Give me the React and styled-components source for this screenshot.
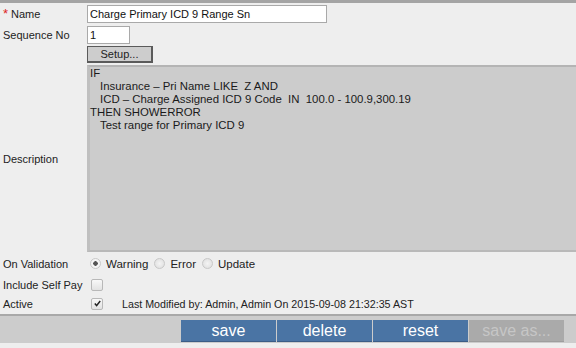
import React from 'react'
import styled, { createGlobalStyle } from 'styled-components';

const GlobalStyle = createGlobalStyle`
  html, body { margin: 0; padding: 0; background: #eeeeee; }
  body { font-family: Arial, "Liberation Sans", sans-serif; font-size: 11px; color: #222; }
`;

const descLines = [
    { text: 'IF', indent: false },
    { text: 'Insurance \u2013 Pri Name LIKE  Z AND', indent: true },
    { text: 'ICD \u2013 Charge Assigned ICD 9 Code  IN  100.0 - 100.9,300.19', indent: true },
    { text: 'THEN SHOWERROR', indent: false },
    { text: 'Test range for Primary ICD 9', indent: true },
];

const App = () => {
    return (
        <>
            <GlobalStyle />
            <PageStyled>
                <div className="form">
                    <div className="row name">
                        <label><span className="req">*</span>Name</label>
                        <div className="field">
                            <input className="txt wide" defaultValue="Charge Primary ICD 9 Range Sn" />
                        </div>
                    </div>
                    <div className="row seq">
                        <label>Sequence No</label>
                        <div className="field">
                            <input className="txt short" defaultValue="1" />
                        </div>
                    </div>
                    <div className="row setup">
                        <label></label>
                        <div className="field">
                            <button className="setup-btn">Setup...</button>
                        </div>
                    </div>
                    <div className="row desc">
                        <label>Description</label>
                        <div className="desc-box">
                            {descLines.map((l, i) => (
                                <p key={i} className={l.indent ? 'ind' : ''}>{l.text}</p>
                            ))}
                        </div>
                    </div>
                    <div className="row validation">
                        <label>On Validation</label>
                        <div className="field opts">
                            <span className="opt"><Radio checked />Warning</span>
                            <span className="opt"><Radio />Error</span>
                            <span className="opt"><Radio />Update</span>
                        </div>
                    </div>
                    <div className="row selfpay">
                        <label>Include Self Pay</label>
                        <div className="field">
                            <Check />
                        </div>
                    </div>
                    <div className="row active">
                        <label>Active</label>
                        <div className="field">
                            <Check checked />
                            <span className="modified">Last Modified by: Admin, Admin On 2015-09-08 21:32:35 AST</span>
                        </div>
                    </div>
                </div>
                <Footer>
                    <ActionButton>save</ActionButton>
                    <ActionButton>delete</ActionButton>
                    <ActionButton>reset</ActionButton>
                    <ActionButton disabled>save as...</ActionButton>
                </Footer>
            </PageStyled>
        </>
    )
}

const Radio = ({ checked }) => (
    <RadioStyled $checked={checked} />
);

const Check = ({ checked }) => (
    <CheckStyled>
        {checked && (
            <svg width="9" height="9" viewBox="0 0 9 9">
                <path d="M1.8 4.6 L3.6 6.6 L7.2 2" fill="none" stroke="#222" strokeWidth="1.5" />
            </svg>
        )}
    </CheckStyled>
);

//styled
const PageStyled = styled.div`
width: 576px;
height: 348px;
overflow: hidden;
border-top: 3px solid #a4a4a4;
box-sizing: border-box;
.form{
    .row{
        display: flex;
        align-items: center;
        label{
            width: 87px;
            flex-shrink: 0;
            padding-left: 3px;
            box-sizing: border-box;
            font-size: 11px;
            white-space: nowrap;
            color: #222;
            .req{
                color: #d22;
                font-size: 13px;
                margin-right: 3px;
            }
        }
        .field{
            display: flex;
            align-items: center;
        }
    }
    .name{ height: 21px; }
    .seq{ height: 21px; }
    .setup{ height: 19px; }
    .txt{
        height: 18px;
        box-sizing: border-box;
        border: 1px solid #a9a9a9;
        background: #fff;
        font-family: Arial, "Liberation Sans", sans-serif;
        font-size: 11px;
        padding: 0 2px;
        color: #111;
        outline: none;
    }
    .wide{ width: 240px; }
    .short{ width: 43px; }
    .setup-btn{
        width: 66px;
        height: 17px;
        padding: 0;
        box-sizing: border-box;
        background: #cdcdcd;
        border: 1px solid #5a5a5a;
        border-right-width: 2px;
        border-bottom-width: 2px;
        font-family: Arial, "Liberation Sans", sans-serif;
        font-size: 11px;
        color: #222;
    }
    .desc{
        margin-top: 1px;
    }
    .desc-box{
        flex: 1;
        height: 187px;
        background: #cccccc;
        border-top: 2px solid #b4b4b4;
        border-left: 3px solid #bfbfbf;
        border-bottom: 2px solid #b9b9b9;
        box-sizing: border-box;
        padding: 0;
        p{
            margin: 0;
            line-height: 13px;
            font-size: 11.4px;
            white-space: pre;
            color: #1a1a1a;
        }
        .ind{ padding-left: 10px; }
    }
    .validation{ height: 23px; }
    .selfpay{ height: 20px; }
    .active{ height: 17px; }
    .opts{
        padding-left: 3px;
        .opt{
            display: flex;
            align-items: center;
            margin-right: 6px;
            font-size: 11.5px;
        }
    }
    .modified{
        margin-left: 19px;
        font-size: 10.7px;
        color: #222;
    }
}
`;

const RadioStyled = styled.span`
width: 9px;
height: 9px;
border-radius: 50%;
border: 1px solid #c8c8c8;
background: radial-gradient(circle, ${p => p.$checked ? '#555 0 2px, #f4f4f4 2.5px' : '#f4f4f4 0, #dcdcdc 100%'});
margin-right: 5px;
flex-shrink: 0;
`;

const CheckStyled = styled.span`
width: 10px;
height: 10px;
margin-left: 4px;
border: 1px solid #b8b8b8;
border-radius: 2px;
background: linear-gradient(#f8f8f8, #e2e2e2);
display: flex;
align-items: center;
justify-content: center;
`;

const Footer = styled.div`
margin-top: 2px;
height: 29px;
background: #cccccc;
border-top: 2px solid #a8a8a8;
box-sizing: border-box;
display: flex;
align-items: flex-end;
padding-left: 181px;
padding-bottom: 1px;
gap: 1px;
`;

const ActionButton = styled.button`
width: 95px;
height: 22px;
padding: 0;
border: none;
border-bottom: 1px solid #3b5d86;
background: ${p => p.disabled ? '#aaaaaa' : '#4a74a4'};
color: ${p => p.disabled ? '#c6c6c6' : '#ffffff'};
font-family: Arial, "Liberation Sans", sans-serif;
font-size: 16px;
line-height: 20px;
${p => p.disabled && 'border-bottom-color: #9e9e9e;'}
`;

export default App
